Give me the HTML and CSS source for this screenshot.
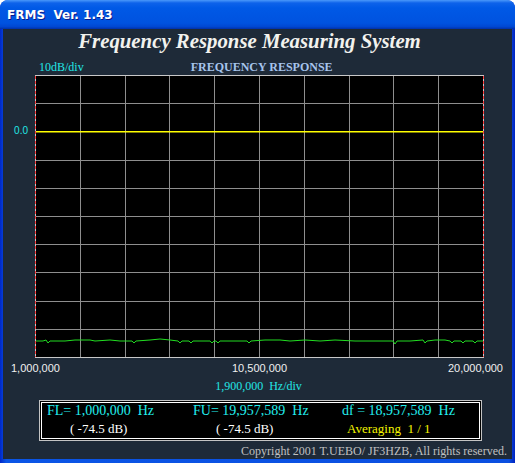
FILE: index.html
```html
<!DOCTYPE html>
<html lang="en">
<head>
  <meta charset="UTF-8">
  <title>FRMS Ver. 1.43</title>
  <link rel="stylesheet" href="styles.css">
</head>
<body>
  <div class="window">
    <div class="titlebar">FRMS&nbsp;&nbsp;Ver. 1.43</div>

    <div class="client">
      <h1 class="title">Frequency Response Measuring System</h1>

      <div class="labels">
        <span class="scale">10dB/div</span>
        <span class="chart-title">FREQUENCY RESPONSE</span>
      </div>

      <div class="plot-row">
        <div class="y-axis"><div class="y-label">0.0</div></div>
        <svg class="plot" width="449" height="283" viewBox="0 0 449 283">
          <rect x="0" y="0" width="449" height="283" fill="#000"/>
          <g stroke="#8e8e8e" stroke-width="1">
            <line x1="45.5" y1="0" x2="45.5" y2="283"/>
            <line x1="90.5" y1="0" x2="90.5" y2="283"/>
            <line x1="134.5" y1="0" x2="134.5" y2="283"/>
            <line x1="179.5" y1="0" x2="179.5" y2="283"/>
            <line x1="224.5" y1="0" x2="224.5" y2="283"/>
            <line x1="269.5" y1="0" x2="269.5" y2="283"/>
            <line x1="314.5" y1="0" x2="314.5" y2="283"/>
            <line x1="358.5" y1="0" x2="358.5" y2="283"/>
            <line x1="403.5" y1="0" x2="403.5" y2="283"/>
            <line x1="0" y1="28.5" x2="449" y2="28.5"/>
            <line x1="0" y1="85.5" x2="449" y2="85.5"/>
            <line x1="0" y1="113.5" x2="449" y2="113.5"/>
            <line x1="0" y1="141.5" x2="449" y2="141.5"/>
            <line x1="0" y1="169.5" x2="449" y2="169.5"/>
            <line x1="0" y1="197.5" x2="449" y2="197.5"/>
            <line x1="0" y1="226.5" x2="449" y2="226.5"/>
            <line x1="0" y1="254.5" x2="449" y2="254.5"/>
          </g>
          <g stroke="#c8c8c8" stroke-width="1">
            <line x1="0" y1="0.5" x2="449" y2="0.5"/>
            <line x1="0" y1="282.5" x2="449" y2="282.5"/>
            <line x1="0.5" y1="0" x2="0.5" y2="283"/>
            <line x1="448.5" y1="0" x2="448.5" y2="283"/>
          </g>
          <g stroke="#ff3c3c" stroke-width="1" stroke-dasharray="3 2">
            <line x1="0.5" y1="1" x2="0.5" y2="282"/>
            <line x1="448.5" y1="1" x2="448.5" y2="282"/>
          </g>
          <!-- 0 dB reference -->
          <rect x="1" y="56" width="447" height="1.5" fill="#ffff00"/>
          <polyline fill="none" stroke="#22dd22" stroke-width="1"
            points="1,266 8,266 11,265 13,268 15,266 30,266 40,265 55,265 60,266 75,265 85,266 97,266 99,268 101,266 115,265 125,264 135,265 143,266 145,268 147,266 154,266 156,268 158,266 175,266 177,268 179,266 181,266 183,268 185,266 200,266 212,266 214,268 216,266 230,265 245,265 255,266 270,265 285,266 300,265 320,266 340,266 358,266 360,269 362,266 375,266 388,265 390,268 392,266 400,265 410,265 415,266 417,268 419,266 426,266 428,268 430,266 438,266 440,268 442,266 448,266"/>
        </svg>
      </div>

      <div class="x-axis">
        <span class="x-left">1,000,000</span>
        <span class="x-mid">10,500,000</span>
        <span class="x-right">20,000,000</span>
      </div>

      <div class="hz-div">1,900,000&nbsp;&nbsp;Hz/div</div>

      <div class="info">
        <div class="info-inner">
          <span class="freq">FL= 1,000,000  Hz</span>
          <span class="freq">FU= 19,957,589  Hz</span>
          <span class="freq">df = 18,957,589  Hz</span>
          <span class="level">( -74.5 dB)</span>
          <span class="level">( -74.5 dB)</span>
          <span class="avg">Averaging  1 / 1</span>
        </div>
      </div>

      <div class="copyright">Copyright 2001 T.UEBO/ JF3HZB, All rights reserved.</div>
    </div>
  </div>
</body>
</html>
```

FILE: styles.css
```css
body {
  margin: 0;
  background: #fff;
  font-family: 'Liberation Serif', serif;
}

.window {
  width: 515px;
  height: 463px;
  display: flex;
  flex-direction: column;
  background: linear-gradient(to right, #0027c8, #0a55e6 1.2%, #0b4fe0 98.8%, #0023c0);
  border-radius: 8px 8px 0 0;
  overflow: hidden;
}

.titlebar {
  height: 29px;
  box-sizing: border-box;
  display: flex;
  align-items: center;
  padding: 1px 0 0 7px;
  color: #fff;
  font: bold 12px 'DejaVu Sans', sans-serif;
  text-shadow: 1px 1px #0c1a8a;
  background: linear-gradient(#4a98fa 0, #0d62ea 3px, #0059e6 8px, #0056e3 50%, #0052df 80%, #0047d2 92%, #0030a8 100%);
}

.client {
  flex: 1;
  margin: 0 3px 4px;
  background: #1e2a38;
  display: flex;
  flex-direction: column;
}

.title {
  margin: 0;
  padding-right: 16px;
  text-align: center;
  color: #f2f2ee;
  font: italic bold 20.8px/24px 'Liberation Serif', serif;
}

.labels {
  display: flex;
  margin: 7px 0 0 36px;
  font-size: 12px;
  line-height: 14px;
}

.scale {
  color: #22e6e6;
}

.chart-title {
  margin-left: 107px;
  font-weight: bold;
  color: #a6c4ec;
}

.plot-row {
  display: flex;
  margin-top: 1px;
}

.y-axis {
  width: 32px;
  box-sizing: border-box;
  padding-right: 7px;
  text-align: right;
}

.y-label {
  margin-top: 50px;
  color: #22e6e6;
  font: 10px/12px 'Liberation Sans', sans-serif;
}

.plot {
  display: block;
}

.x-axis {
  display: grid;
  grid-template-columns: 1fr auto 1fr;
  margin-top: 3px;
  padding: 0 9px 0 8px;
  color: #f0f0f0;
  font: 11px/14px 'Liberation Sans', sans-serif;
}

.x-mid {
  margin-left: 5px;
}

.x-right {
  justify-self: end;
}

.hz-div {
  margin-top: 4px;
  padding-left: 2px;
  text-align: center;
  color: #22e6e6;
  font-size: 12px;
  line-height: 14px;
}

.info {
  width: 443px;
  box-sizing: border-box;
  margin: 7px 0 0 36px;
  padding: 1px;
  border: 1px solid #c4c4c4;
  background: #000;
}

.info-inner {
  display: grid;
  grid-template-columns: 146px 149px 1fr;
  row-gap: 2px;
  padding: 0 0 1px 5px;
  border: 1px solid #fff;
  white-space: pre;
}

.freq {
  color: #22eeee;
  font-size: 14px;
  line-height: 16px;
}

.level {
  padding-left: 23px;
  color: #fff;
  font-size: 13px;
  line-height: 16px;
}

.avg {
  padding-left: 5px;
  color: #f4f400;
  font-size: 13px;
  line-height: 16px;
}

.copyright {
  margin-top: 3px;
  padding-right: 5px;
  text-align: right;
  color: #c0c0c0;
  font-size: 12px;
  line-height: 14px;
}
```
